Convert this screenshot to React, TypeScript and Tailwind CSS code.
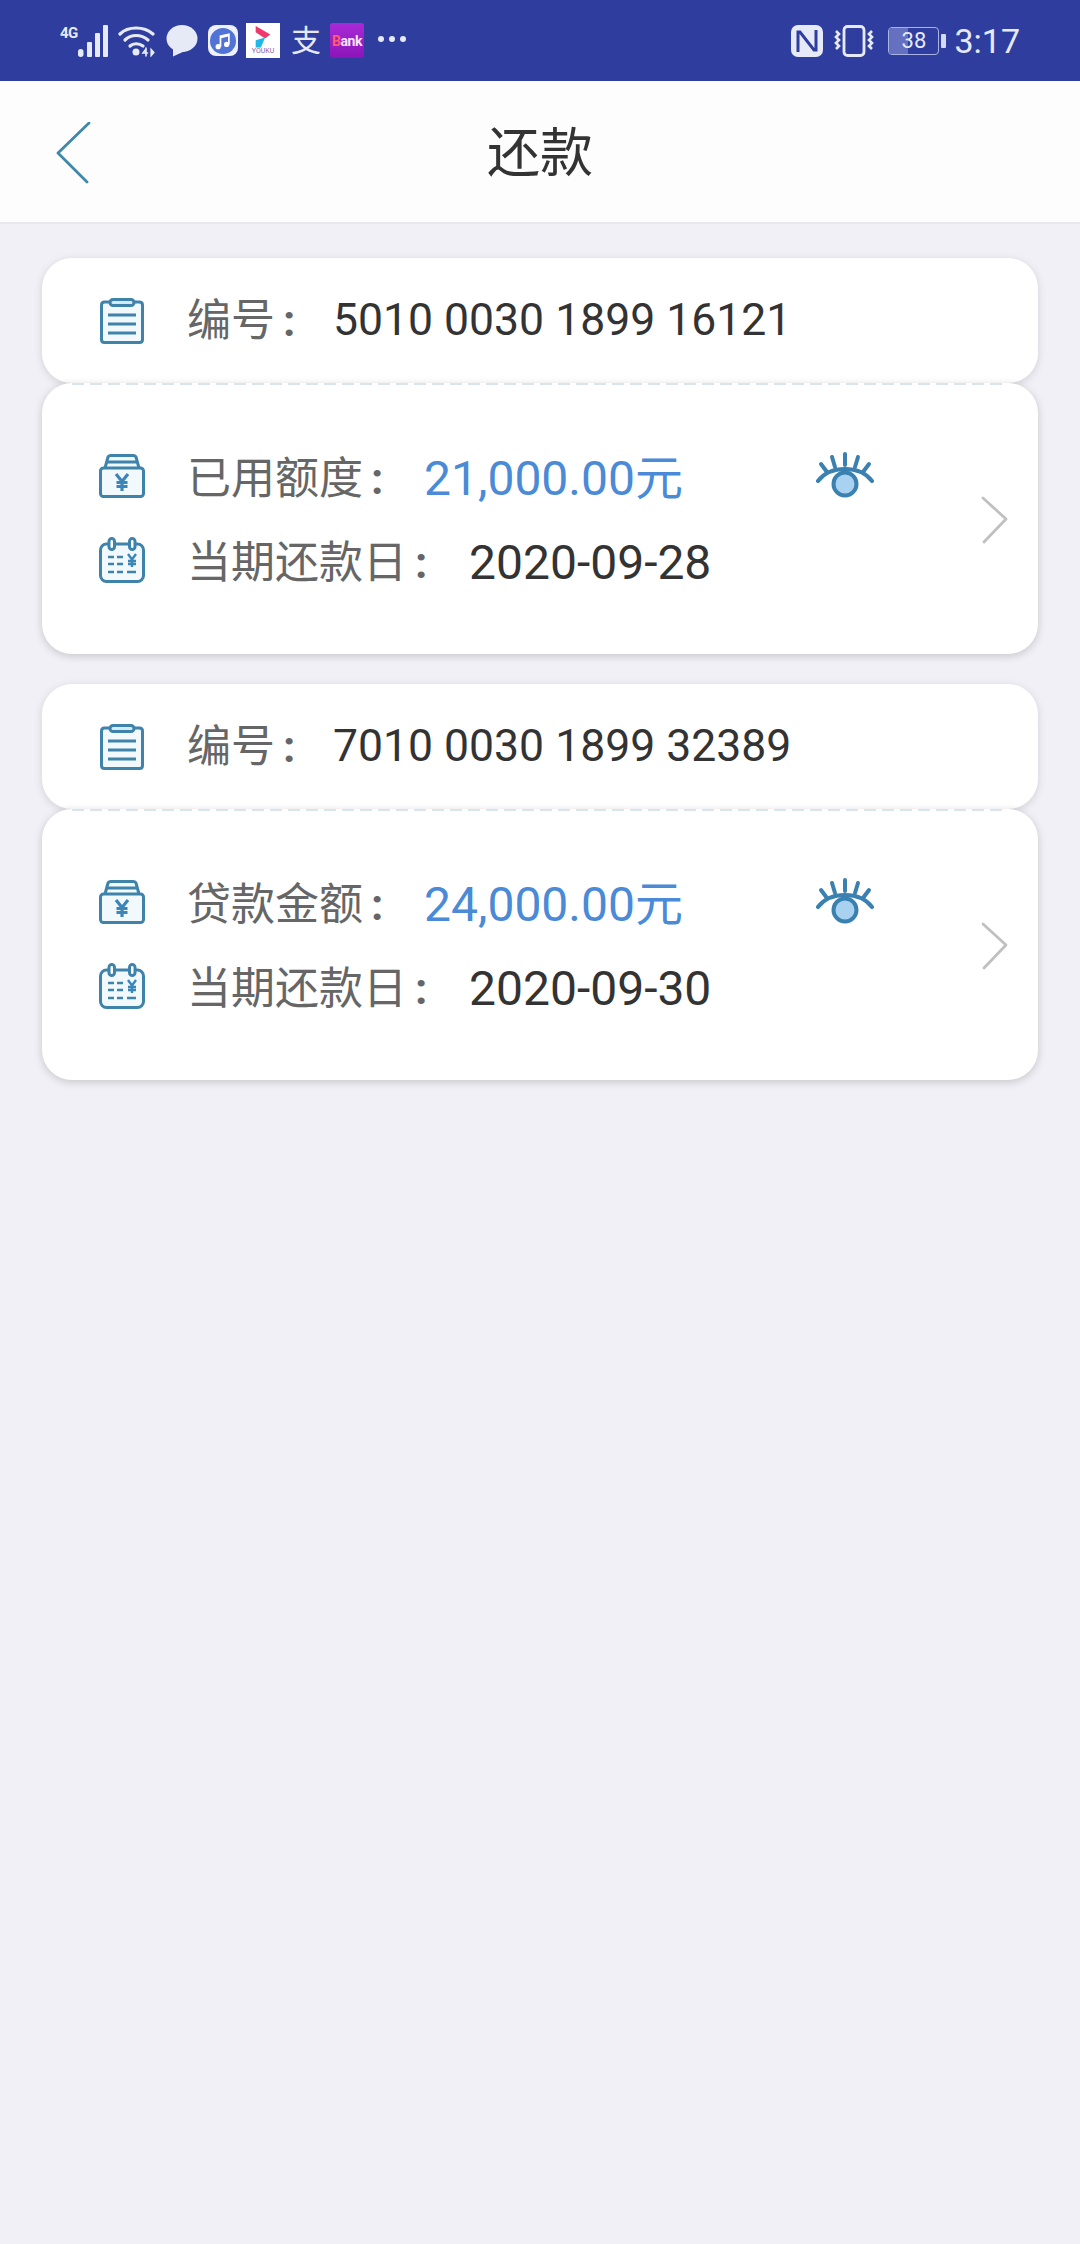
const FONT = "font-['Roboto','Noto_Sans_CJK_SC',sans-serif]";

function Signal() {
  return (
    <div className="flex h-[32px] items-start">
      <span className="w-[18px] text-[15px] font-bold leading-[16px] tracking-[-0.5px] text-[#e6eaf6]">4G</span>
      <svg width="32" height="32" viewBox="18 0 32 32" fill="#e6eaf6">
        <rect x="18" y="24" width="5.500" height="8" rx="2.700" />
        <rect x="27" y="17" width="5" height="15" rx="1" />
        <rect x="35" y="8" width="5" height="24" rx="1" />
        <rect x="43" y="0" width="5" height="32" rx="1" />
      </svg>
    </div>
  );
}

function Wifi() {
  return (
    <svg width="38" height="32" viewBox="0 0 38 32" fill="none" stroke="#e6eaf6" strokeWidth="3.200" strokeLinecap="round">
      <path d="M2 9C10 1 26 1 35 9" />
      <path d="M7 15C13 9 23 9 30 15" />
      <path d="M12 21C15 18 21 18 25 21" />
      <circle cx="18" cy="27" r="3.500" fill="#e6eaf6" stroke="none" />
      <path d="M28 24l-3 4h4.500M28 23v8" strokeWidth="1.600" />
      <path d="M33 24v7l3-3.500z" strokeWidth="1.200" fill="#e6eaf6" />
    </svg>
  );
}

function Bubble() {
  return (
    <svg width="32" height="32" viewBox="0 0 32 32" fill="#e6eaf6">
      <ellipse cx="16" cy="13.500" rx="15.500" ry="13.500" />
      <path d="M7 22L7 31.500L19 26z" />
    </svg>
  );
}

function MusicApp() {
  return (
    <div className="flex h-[31px] w-[30px] items-center justify-center rounded-[8px] bg-[#eef0fb]">
      <div className="flex h-[26px] w-[26px] items-center justify-center rounded-full bg-[#5273d6]">
        <svg width="18" height="18" viewBox="0 0 16 16" fill="#fff">
          <path d="M5 3l9-2v10h-1.500V4L6.500 5.500V13H5z" />
          <circle cx="3.700" cy="13" r="2.300" />
          <circle cx="11.200" cy="11" r="2.300" />
        </svg>
      </div>
    </div>
  );
}

function YoukuApp() {
  return (
    <div className="flex h-[35px] w-[34px] flex-col items-center bg-white pt-[3px]">
      <svg width="20" height="22" viewBox="0 0 18 21">
        <path d="M2 0L16 8L11 12L2 6z" fill="#f0386b" />
        <path d="M11 11L2 13.500V20.500H7z" fill="#1fb8e8" />
      </svg>
      <div className="mt-[-1px] text-[7px] leading-[9px] text-[#8a5aa8]">YOUKU</div>
    </div>
  );
}

function BankApp() {
  return (
    <div className="flex h-[35px] w-[34px] items-center justify-center rounded-[3px] bg-gradient-to-b from-[#a82ad8] to-[#8d14b8]">
      <span className="text-[14px] font-bold leading-none tracking-[-0.5px] text-[#f6e6f8]">
        <span className="text-[#ff5a6e]">B</span>ank
      </span>
    </div>
  );
}

function Nfc() {
  return (
    <svg width="32" height="32" viewBox="0 0 32 32">
      <rect x="0" y="0" width="32" height="32" rx="7" fill="#e6eaf6" />
      <path d="M7 27V7h2l14 18h2V5" fill="none" stroke="#2f3e9e" strokeWidth="3" />
    </svg>
  );
}

function Vibrate() {
  return (
    <svg width="42" height="32" viewBox="0 0 42 32" fill="none" stroke="#e6eaf6">
      <rect x="11" y="1.500" width="20" height="29" rx="3.500" strokeWidth="2.800" />
      <path d="M3 6l3 3-3 3 3 3-3 3 3 3-3 3" strokeWidth="2.600" />
      <path d="M39 6l-3 3 3 3-3 3 3 3-3 3 3 3" strokeWidth="2.600" />
    </svg>
  );
}

function Battery() {
  return (
    <div className="flex items-center gap-[2px]">
      <div className="relative flex h-[28px] w-[51px] items-center justify-center overflow-hidden rounded-[4px] border border-[#aab4e4]">
        <div className="absolute bottom-0 left-0 top-0 w-[19px] bg-[#6571c0]" />
        <span className="relative text-[22px] leading-none text-[#e6eaf6]">38</span>
      </div>
      <div className="h-[14px] w-[5px] rounded-[1px] bg-[#d4d9f0]" />
    </div>
  );
}

function StatusBar() {
  return (
    <div className="flex h-[81px] items-center justify-between bg-[#2f3e9e] pl-[60px] pr-[60px]">
      <div className="flex items-center">
        <Signal />
        <div className="ml-[8px]"><Wifi /></div>
        <div className="ml-[10px]"><Bubble /></div>
        <div className="ml-[10px]"><MusicApp /></div>
        <div className="ml-[8px]"><YoukuApp /></div>
        <span className="ml-[11px] w-[32px] text-[30px] leading-none text-[#e6eaf6]">支</span>
        <div className="ml-[7px]"><BankApp /></div>
        <span className="ml-[14px] mt-[-3px] flex gap-[5px]">
          <i className="h-[6px] w-[6px] rounded-full bg-[#e6eaf6]" />
          <i className="h-[6px] w-[6px] rounded-full bg-[#e6eaf6]" />
          <i className="h-[6px] w-[6px] rounded-full bg-[#e6eaf6]" />
        </span>
      </div>
      <div className="flex items-center">
        <Nfc />
        <div className="ml-[10px]"><Vibrate /></div>
        <div className="ml-[13px]"><Battery /></div>
        <span className="ml-[8px] text-[34px] leading-none text-[#e6eaf6]">3:17</span>
      </div>
    </div>
  );
}

function Header() {
  return (
    <div className="relative flex h-[143px] items-center justify-center border-b-2 border-[#e8e8ec] bg-[#fdfdfd]">
      <svg className="absolute left-[56px] top-[41px]" width="36" height="62" viewBox="0 0 36 62" fill="none" stroke="#3f87ab" strokeWidth="2.800" strokeLinecap="round" strokeLinejoin="round">
        <path d="M33 1L2 31L31 60" />
      </svg>
      <span className="mt-[6px] text-[53px] leading-none text-[#333333]">还款</span>
    </div>
  );
}

function ClipboardIcon() {
  return (
    <svg width="44" height="46" viewBox="0 0 44 46" fill="none" stroke="#3f83ab" strokeWidth="3">
      <path d="M10 4H4.500Q1.500 4 1.500 7V41.500Q1.500 44.500 4.500 44.500H39.500Q42.500 44.500 42.500 41.500V7Q42.500 4 39.500 4H34" fill="#f2f9fd" />
      <rect x="10" y="1.500" width="24" height="6" rx="3" fill="#d6eaf6" />
      <path d="M8 17H36M8 26H36M8 35H36" />
    </svg>
  );
}

function WalletIcon() {
  return (
    <svg width="46" height="44" viewBox="0 0 46 44" fill="none" stroke="#3f83ab" strokeWidth="3">
      <path d="M6 14L9 3Q9.500 1.500 11.500 1.500H34.500Q36.500 1.500 37 3L40 14" fill="#f2f9fd" />
      <path d="M8 8H38" />
      <rect x="1.500" y="14" width="43" height="28.500" rx="3" fill="#f2f9fd" />
      <path d="M17 20L23 27.500L29 20M23 27.500V37M17.500 28.500H28.500M17.500 32.500H28.500" stroke="#3a86bb" strokeWidth="3.200" />
    </svg>
  );
}

function CalendarIcon() {
  return (
    <svg width="46" height="46" viewBox="0 0 46 46" fill="none" stroke="#3f83ab" strokeWidth="3">
      <rect x="1.500" y="7" width="43" height="37.500" rx="6" fill="#f2f9fd" />
      <rect x="10" y="1.500" width="5.500" height="11" rx="2.750" fill="#fff" />
      <rect x="30.500" y="1.500" width="5.500" height="11" rx="2.750" fill="#fff" />
      <path d="M9 20H15M18 20H24M9 27H15M18 27H24M9 35H15M18 35H24M28 35H37" strokeWidth="2.400" />
      <path d="M29 17L33 22.500L37 17M33 22.500V30M29 24H37M29 27H37" stroke="#3a86bb" strokeWidth="2.400" />
    </svg>
  );
}

function EyeIcon() {
  return (
    <svg width="58" height="46" viewBox="0 0 58 46" fill="none" stroke="#3a80b0" strokeWidth="4" strokeLinecap="round">
      <path d="M2 29C14 13 44 13 56 29" />
      <path d="M29 2V13M16 5L19 15M42 5L39 15M5 12L11 20M53 12L47 20" />
      <circle cx="29" cy="32" r="11.500" fill="#a8d2f0" />
    </svg>
  );
}

function ChevronRight() {
  return (
    <svg width="27" height="48" viewBox="0 0 27 48" fill="none" stroke="#c0c0c0" strokeWidth="2.800" strokeLinecap="round" strokeLinejoin="round">
      <path d="M2 2L25 23L3 46" />
    </svg>
  );
}

type Loan = {
  no: string;
  label: string;
  amount: string;
  due: string;
};

const loans: Loan[] = [
  { no: "5010 0030 1899 16121", label: "已用额度", amount: "21,000.00元", due: "2020-09-28" },
  { no: "7010 0030 1899 32389", label: "贷款金额", amount: "24,000.00元", due: "2020-09-30" },
];

function Colon() {
  return <span className="ml-[8px] font-bold">:</span>;
}

function LoanCard({ loan }: { loan: Loan }) {
  return (
    <div>
      <div className="flex h-[125px] items-center rounded-[30px] bg-white pl-[58px] shadow-[0_2px_8px_rgba(0,0,0,0.13)]">
        <ClipboardIcon />
        <span className="ml-[43px] w-[146px] text-[44px] leading-none text-[#666666]">
          编号<Colon />
        </span>
        <span className="text-[44.500px] leading-none text-[#333333]">{loan.no}</span>
      </div>
      <div className="flex h-[271px] flex-col rounded-[30px] bg-white shadow-[0_2px_8px_rgba(0,0,0,0.18)]">
        <div className="mx-[30px] h-[2px] bg-[repeating-linear-gradient(90deg,#d8e4ee_0_12px,transparent_12px_18px)]" />
        <div className="flex flex-1 items-center justify-between pl-[57px] pr-[30px]">
          <div className="flex flex-col gap-[38px] pt-[2px]">
            <div className="flex h-[46px] items-center">
              <div className="mt-[-6px]"><WalletIcon /></div>
              <span className="ml-[42px] w-[237px] text-[44px] leading-none text-[#666666]">
                {loan.label}<Colon />
              </span>
              <span className="w-[392px] text-[48px] leading-none text-[#4a8ad6]">{loan.amount}</span>
              <div className="mb-[8px]"><EyeIcon /></div>
            </div>
            <div className="flex h-[46px] items-center">
              <div className="mt-[-6px]"><CalendarIcon /></div>
              <span className="ml-[42px] w-[282px] text-[44px] leading-none text-[#666666]">
                当期还款日<Colon />
              </span>
              <span className="text-[48px] leading-none text-[#333333]">{loan.due}</span>
            </div>
          </div>
          <ChevronRight />
        </div>
      </div>
    </div>
  );
}

export default function App() {
  return (
    <div className={`min-h-[2244px] bg-[#f0f0f6] ${FONT}`}>
      <StatusBar />
      <Header />
      <div className="flex flex-col gap-[30px] pl-[42px] pr-[42px] pt-[34px]">
        {loans.map((loan) => (
          <LoanCard key={loan.no} loan={loan} />
        ))}
      </div>
    </div>
  );
}
